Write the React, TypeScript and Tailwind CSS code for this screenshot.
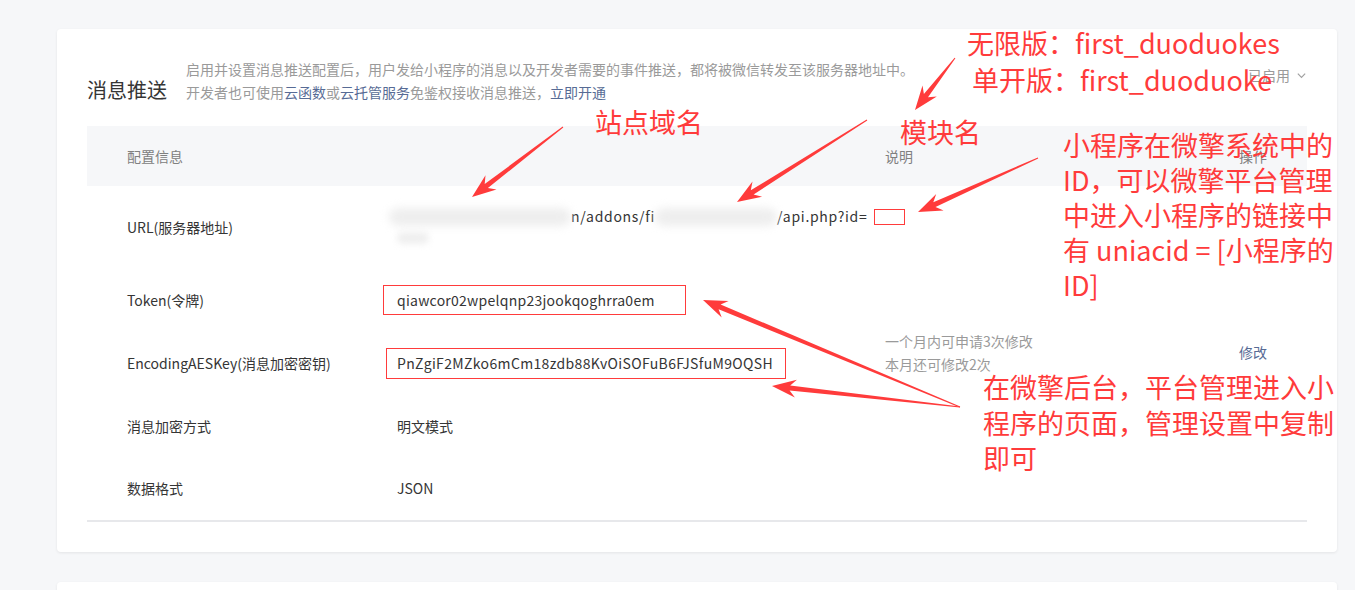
import React from 'react';

const RED = '#ff3b3b';

// tapered arrow polygon from tail to tip, the way the annotation tool draws them
function arrowPoints(x1: number, y1: number, x2: number, y2: number) {
  const dx = x2 - x1;
  const dy = y2 - y1;
  const len = Math.hypot(dx, dy);
  const ux = dx / len;
  const uy = dy / len;
  const nx = -uy;
  const ny = ux;
  const L = 24;
  const W = 9;
  const notch = 6;
  const bx = x2 - ux * L;
  const by = y2 - uy * L;
  const jx = x2 - ux * (L - notch);
  const jy = y2 - uy * (L - notch);
  const pts = [
    [x1 + nx * 0.5, y1 + ny * 0.5],
    [jx + nx * 2.6, jy + ny * 2.6],
    [bx + nx * W, by + ny * W],
    [x2, y2],
    [bx - nx * W, by - ny * W],
    [jx - nx * 2.6, jy - ny * 2.6],
    [x1 - nx * 0.5, y1 - ny * 0.5],
  ];
  return pts.map((p) => `${p[0].toFixed(1)},${p[1].toFixed(1)}`).join(' ');
}

const arrows = [
  [563, 127, 472, 197],
  [867, 120, 737, 202],
  [955, 58, 915, 110],
  [1038, 158, 918, 212],
  [960, 407, 703, 300],
  [960, 407, 772, 386],
];

function Blur({ w }: { w: string }) {
  return <span className={`inline-block h-[18px] shrink-0 rounded-full bg-[#eeeeee] blur-[4px] ${w}`} />;
}

function UrlValue() {
  return (
    <div className="flex flex-col">
      <div className="-ml-[8px] flex h-[21px] items-center whitespace-nowrap tracking-[0.7px]">
        <Blur w="w-[182px]" />
        <span className="shrink-0">n/addons/fi</span>
        <Blur w="w-[122px]" />
        <span className="shrink-0">/api.php?id=</span>
        <span className="ml-[7px] h-[16px] w-[31px] shrink-0 border-[1.5px] border-[#ff3b3b]" />
      </div>
      <div className="flex h-[21px] items-center">
        <span className="inline-block h-[12px] w-[32px] rounded-full bg-[#efefef] blur-[3px]" />
      </div>
    </div>
  );
}

export default function App() {
  return (
    <div className="relative h-[590px] w-[1355px] overflow-hidden bg-[#f6f7f9] font-['Noto_Sans_CJK_SC',sans-serif] text-[14px] text-[#353535]">
      <div className="pl-[57px] pt-[29px]">
        {/* message push card */}
        <div className="w-[1280px] rounded-[4px] bg-white px-[30px] pb-[30px] shadow-[0_1px_3px_rgba(0,0,0,0.08)]">
          <div className="flex h-[97px] items-start">
            <h2 className="mt-[47px] w-[99px] text-[20px] font-normal leading-[28px]">消息推送</h2>
            <div className="pt-[29px] leading-[23px] text-[#9a9a9a]">
              <p>启用并设置消息推送配置后，用户发给小程序的消息以及开发者需要的事件推送，都将被微信转发至该服务器地址中。</p>
              <p>
                开发者也可使用<span className="text-[#576b95]">云函数</span>或
                <span className="text-[#576b95]">云托管服务</span>免鉴权接收消息推送，
                <span className="text-[#576b95]">立即开通</span>
              </p>
            </div>
            <div className="ml-auto mt-[36px] flex items-center gap-[6px] leading-[20px] text-[#9a9a9a]">
              <span>已启用</span>
              <svg width="11" height="11" viewBox="0 0 12 12" fill="none" stroke="#a0a0a0" strokeWidth="1.3">
                <path d="M2 4l4 4 4-4" />
              </svg>
            </div>
          </div>

          <div className="w-[1220px] border-b-2 border-[#e7e8eb]">
            <div className="flex h-[60px] items-center bg-[#f6f7f9] text-[#808080]">
              <div className="w-[310px] pl-[40px]">配置信息</div>
              <div className="w-[488px]" />
              <div className="w-[354px]">说明</div>
              <div>操作</div>
            </div>

            <div className="flex h-[77px] items-center pt-[5px]">
              <div className="w-[310px] shrink-0 pl-[40px]">URL(服务器地址)</div>
              <div className="w-[488px] shrink-0">
                <UrlValue />
              </div>
            </div>

            <div className="flex h-[69px] items-center pt-[5px]">
              <div className="w-[310px] pl-[40px]">Token(令牌)</div>
              <div className="w-[488px]">
                <span className="-ml-[14px] flex h-[30px] w-[303px] items-center border border-[#ff3b3b] pl-[13px] tracking-[0.25px]">
                  qiawcor02wpelqnp23jookqoghrra0em
                </span>
              </div>
            </div>

            <div className="flex h-[63px] items-center">
              <div className="w-[310px] pl-[40px]">EncodingAESKey(消息加密密钥)</div>
              <div className="w-[488px]">
                <span className="-ml-[11px] flex h-[31px] w-[400px] items-center border border-[#ff3b3b] pl-[10px] tracking-[0.35px]">
                  PnZgiF2MZko6mCm18zdb88KvOiSOFuB6FJSfuM9OQSH
                </span>
              </div>
              <div className="mb-[22px] w-[354px] leading-[23px] text-[#9a9a9a]">
                <p>一个月内可申请3次修改</p>
                <p>本月还可修改2次</p>
              </div>
              <div className="mb-[22px] text-[#576b95]">修改</div>
            </div>

            <div className="flex h-[62px] items-center">
              <div className="w-[310px] pl-[40px]">消息加密方式</div>
              <div className="w-[488px]">明文模式</div>
            </div>

            <div className="flex h-[63px] items-center">
              <div className="w-[310px] pl-[40px]">数据格式</div>
              <div className="w-[488px]">JSON</div>
            </div>
          </div>
        </div>

        <div className="mt-[30px] h-[120px] w-[1280px] rounded-[4px] bg-white shadow-[0_1px_3px_rgba(0,0,0,0.08)]" />
      </div>

      {/* red annotations drawn over the screenshot */}
      <svg className="pointer-events-none absolute left-0 top-0" width="1355" height="590">
        {arrows.map((a, i) => (
          <polygon key={i} points={arrowPoints(a[0], a[1], a[2], a[3])} fill={RED} />
        ))}
      </svg>
      <div className="pointer-events-none absolute left-0 top-0 text-[27px] leading-[36px] text-[#ff3b3b]">
        <div className="absolute left-[967px] top-[25px] whitespace-nowrap">无限版：first_duoduokes</div>
        <div className="absolute left-[972px] top-[62px] whitespace-nowrap">单开版：first_duoduoke</div>
        <div className="absolute left-[900px] top-[114px] whitespace-nowrap">模块名</div>
        <div className="absolute left-[595px] top-[104px] whitespace-nowrap">站点域名</div>
        <div className="absolute left-[1063px] top-[127px] whitespace-nowrap leading-[35px]">
          <div>小程序在微擎系统中的</div>
          <div>ID，可以微擎平台管理</div>
          <div>中进入小程序的链接中</div>
          <div>有 uniacid = [小程序的</div>
          <div>ID]</div>
        </div>
        <div className="absolute left-[983px] top-[369px] whitespace-nowrap leading-[35.5px]">
          <div>在微擎后台，平台管理进入小</div>
          <div>程序的页面，管理设置中复制</div>
          <div>即可</div>
        </div>
      </div>
    </div>
  );
}
